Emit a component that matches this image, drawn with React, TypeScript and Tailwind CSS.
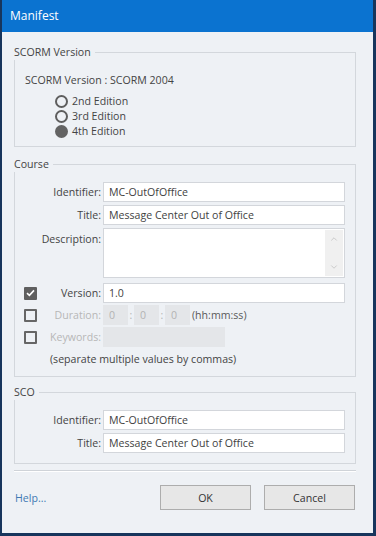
import React from "react";
import { ChevronUp, ChevronDown } from "lucide-react";

function Radio({ checked, label }: { checked?: boolean; label: string }) {
  return (
    <div className="flex h-[15px] items-center">
      <span
        className={
          checked
            ? "box-border h-[13px] w-[13px] rounded-full bg-[#636363]"
            : "box-border h-[13px] w-[13px] rounded-full border-2 border-[#5e5e5e]"
        }
      />
      <span className="ml-[4px] leading-[15px]">{label}</span>
    </div>
  );
}

function Check({ checked }: { checked?: boolean }) {
  if (checked) {
    return (
      <span className="flex h-[13px] w-[13px] shrink-0 items-center justify-center rounded-[1px] bg-[#5f5f5f]">
        <svg width="9" height="8" viewBox="0 0 9 8">
          <path d="M1 4.2 L3.4 6.4 L8 1.4" fill="none" stroke="#fff" strokeWidth="1.6" />
        </svg>
      </span>
    );
  }
  return <span className="box-border h-[13px] w-[13px] shrink-0 rounded-[1px] border-2 border-[#666]" />;
}

function TextBox({ value }: { value: string }) {
  return (
    <div className="ml-[2px] box-border flex h-[20px] w-[242px] items-center border border-[#d3d6db] bg-white px-[5px] text-[#3f3f3f]">
      {value}
    </div>
  );
}

function Row({ label, value }: { label: string; value: string }) {
  return (
    <div className="flex h-[20px] items-center">
      <span className="w-[77px] text-right">{label}</span>
      <TextBox value={value} />
    </div>
  );
}

export default function App() {
  return (
    <div className="box-border flex h-[536px] w-[376px] flex-col border-b-[3px] border-l-2 border-r-[3px] border-[#17355c] bg-[#eef1f5] font-['Open_Sans',sans-serif] text-[10.6px] leading-4 text-[#444]">
      <div className="flex h-[32px] shrink-0 items-center bg-[#0b73d0] pl-2 text-[12px] text-white">Manifest</div>

      <div className="flex flex-1 flex-col pl-3 pr-[17px] pt-3">
        {/* SCORM Version */}
        <fieldset className="border border-[#d3d7dc] pb-[7px]">
          <legend className="-ml-px bg-[#eef1f5] pr-1 leading-4">SCORM Version</legend>
          <div className="mt-3 pl-[10px] leading-4">SCORM Version : SCORM 2004</div>
          <div className="ml-10 mt-[6px] flex flex-col">
            <Radio label="2nd Edition" />
            <Radio label="3rd Edition" />
            <Radio checked label="4th Edition" />
          </div>
        </fieldset>

        {/* Course */}
        <fieldset className="mt-[9px] border border-[#d3d7dc] pb-[9px] pl-[9px] pr-[10px]">
          <legend className="-ml-[10px] bg-[#eef1f5] pr-1 leading-4">Course</legend>
          <div className="mt-[10px] flex flex-col">
            <Row label="Identifier:" value="MC-OutOfOffice" />
            <div className="mt-[3px]">
              <Row label="Title:" value="Message Center Out of Office" />
            </div>
            <div className="mt-[3px] flex">
              <span className="mt-[3px] w-[77px] text-right">Description:</span>
              <div className="ml-[2px] box-border flex h-[50px] w-[242px] justify-end border border-[#d3d6db] bg-white p-px">
                <div className="flex w-[18px] flex-col items-center justify-between bg-[#f0f0f0] py-[4px] text-[#b4b4b4]">
                  <ChevronUp size={10} strokeWidth={1.5} />
                  <ChevronDown size={10} strokeWidth={1.5} />
                </div>
              </div>
            </div>
            <div className="mt-[5px] flex h-[20px] items-center">
              <div className="flex w-[77px] items-center">
                <Check checked />
                <span className="flex-1 text-right">Version:</span>
              </div>
              <TextBox value="1.0" />
            </div>
            <div className="mt-[2px] flex h-[20px] items-center">
              <div className="flex w-[77px] items-center">
                <Check />
                <span className="flex-1 text-right text-[#b7b7b7]">Duration:</span>
              </div>
              <div className="ml-[2px] flex items-center text-[#b3b3b3]">
                <span className="flex h-[20px] w-[25px] items-center bg-[#e4e6e9] pl-[6px]">0</span>
                <span className="w-[6px] text-center">:</span>
                <span className="flex h-[20px] w-[25px] items-center bg-[#e4e6e9] pl-[6px]">0</span>
                <span className="w-[6px] text-center">:</span>
                <span className="flex h-[20px] w-[25px] items-center bg-[#e4e6e9] pl-[6px]">0</span>
                <span className="ml-[2px] text-[#5a5a5a]">(hh:mm:ss)</span>
              </div>
            </div>
            <div className="mt-[2px] flex h-[20px] items-center">
              <div className="flex w-[77px] items-center">
                <Check />
                <span className="flex-1 text-right text-[#b7b7b7]">Keywords:</span>
              </div>
              <span className="ml-[2px] h-[20px] w-[122px] bg-[#e4e6e9]" />
            </div>
            <div className="ml-[26px] mt-[4px] leading-4">(separate multiple values by commas)</div>
          </div>
        </fieldset>

        {/* SCO */}
        <fieldset className="mt-[7px] border border-[#d3d7dc] pb-[10px] pl-[9px] pr-[10px]">
          <legend className="-ml-[10px] bg-[#eef1f5] pr-1 leading-4">SCO</legend>
          <div className="mt-[10px] flex flex-col">
            <Row label="Identifier:" value="MC-OutOfOffice" />
            <div className="mt-[3px]">
              <Row label="Title:" value="Message Center Out of Office" />
            </div>
          </div>
        </fieldset>

        <div className="mt-[6px] border-b border-t border-b-white border-t-[#cfd3d8]" />

        <div className="mt-[13px] flex items-center justify-between">
          <span className="pl-px text-[#3f79b3]">Help...</span>
          <div className="mr-px flex gap-[13px]">
            <button className="box-border h-[25px] w-[91px] border border-[#adadad] bg-[#e7e7e7] text-[#333]">OK</button>
            <button className="box-border h-[25px] w-[91px] border border-[#adadad] bg-[#e7e7e7] text-[#333]">Cancel</button>
          </div>
        </div>
      </div>
    </div>
  );
}
